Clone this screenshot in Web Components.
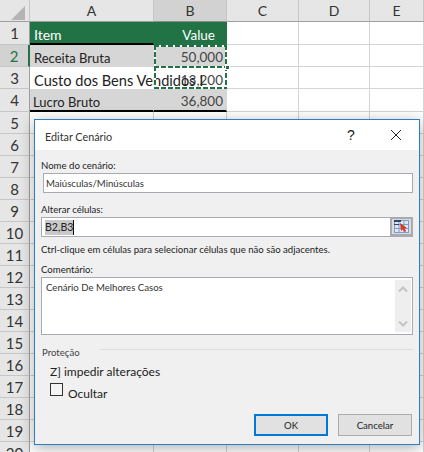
<!DOCTYPE html>
<html lang="pt"><head><meta charset="utf-8"><title>Editar Cenário</title>
<style>
html,body{margin:0;padding:0;background:#fff;overflow:hidden}
x-app{width:424px;height:452px}
</style></head><body>
<x-app>
  <x-sheet></x-sheet>
  <x-dialog title="Editar Cenário">
    <x-field class="inset" label="Nome do cenário:" value="Maiúsculas/Minúsculas"></x-field>
    <x-field label="Alterar células:" value="B2,B3" selected hint="Ctrl-clique em células para selecionar células que não são adjacentes."></x-field>
    <x-comment label="Comentário:" value="Cenário De Melhores Casos"></x-comment>
    <x-protect></x-protect>
    <x-button slot="actions" default>OK</x-button>
    <x-button slot="actions">Cancelar</x-button>
  </x-dialog>
</x-app>
<script>
customElements.define('x-app',class extends HTMLElement{constructor(){super();this.attachShadow({mode:'open'}).innerHTML=
`<style>:host{display:block;position:relative;overflow:hidden;width:424px;height:452px}</style><slot></slot>`}});

customElements.define('x-sheet',class extends HTMLElement{constructor(){super();
 const cols=['A','B','C','D','E'];
 const data={1:['Item','Value'],2:['Receita Bruta','50,000'],3:['Custo dos Bens Vendidos I','13,200'],4:['Lucro Bruto','36,800']};
 let h=`<div class="corner"><svg width="14" height="14" viewBox="0 0 14 14"><path d="M14 0V14H0Z" fill="#b4b4b4"/></svg></div>`;
 cols.forEach(c=>h+=`<div class="ch ${c==='B'?'on':''}">${c}</div>`);
 for(let r=1;r<=20;r++){
  h+=`<div class="rh ${r===2?'on':''}">${r}</div>`;
  cols.forEach((c,i)=>{
   let cls='c',t='';
   if(data[r]&&i<2){cls+=` d r${r} ${i?'num':'txt'}`;t=data[r][i];}
   h+=`<div class="${cls}"><span>${t}</span></div>`;
  });
 }
 const hz='repeating-linear-gradient(90deg,#217346 0 5px,#fff 5px 7px)';
 const vt='repeating-linear-gradient(180deg,#217346 0 5px,#fff 5px 7px)';
 this.attachShadow({mode:'open'}).innerHTML=`<style>
 :host{display:grid;grid-template-columns:30px 124px 73px 72px 71px 54px;grid-template-rows:22px 23px 22px 22px 23px repeat(16,22px);
  font:14px/1 Lato,"Liberation Sans",sans-serif;color:#222;position:relative;height:452px;overflow:hidden}
 .corner{background:#e6e6e6;border-right:1px solid #c6c6c6;border-bottom:1px solid #9e9e9e;box-sizing:border-box;display:flex;align-items:flex-end;justify-content:flex-end;padding:0 4px 1px 0}
 .ch{background:#e6e6e6;border-right:1px solid #c6c6c6;border-bottom:1px solid #9e9e9e;box-sizing:border-box;display:flex;align-items:center;justify-content:center;font:14px Lato,sans-serif;color:#333}
 .ch.on{background:#d2d2d2;border-bottom:1px solid #8e8e8e}
 .rh{background:#e6e6e6;border-right:1px solid #9e9e9e;border-bottom:1px solid #c6c6c6;box-sizing:border-box;display:flex;align-items:center;justify-content:center;font:15px Lato,sans-serif;color:#333}
 .rh.on{background:#d2d2d2;color:#217346;border-right:2px solid #217346}
 .c{border-right:1px solid #d4d4d4;border-bottom:1px solid #d4d4d4;box-sizing:border-box;display:flex;align-items:center;padding:0 3px;white-space:nowrap;min-width:0}
 .d{border-color:transparent}
 .num{justify-content:flex-end;padding-right:3px}
 .txt span{position:relative;z-index:1}
 .r1{background:#217346;color:#fff;font-size:14px;padding-top:4px}
 .r1.txt{padding-left:4px;border-bottom:2px solid #000}
 .r1.num{padding-right:11px;border-bottom-width:0;font-size:13.5px}
 .r2{background:#d6d6d6}
 .r3{background:#fff}
 .r3.txt{border-color:transparent}
 .r4{background:#d6d6d6;border-bottom:2px solid #000}
 .txt{padding-left:4px}
 .r2.txt{font-size:13px;padding-top:6px}
 .r4.txt{font-size:13px;padding-left:3px;padding-top:6px}
 .r3.txt{font-size:14.6px;padding-top:8px}
 .r2.num,.r3.num,.r4.num{font-size:13.5px;color:#444}
 .r2.num{padding-top:4px}.r3.num{padding-top:6px}.r4.num{padding-top:4px}
 .ants{position:absolute;left:154px;top:45px;width:73px;height:44px;z-index:3;background:
   ${hz} 0 0/100% 2px no-repeat,
   ${hz} 0 21px/100% 2px no-repeat,
   ${hz} 0 100%/100% 2px no-repeat,
   ${vt} 0 0/2px 100% no-repeat,
   ${vt} 100% 0/2px 100% no-repeat}
 .handle{position:absolute;left:225px;top:65px;width:3px;height:3px;background:#217346;border:1px solid #fff;z-index:4}
 </style>${h}<div class="ants"></div><div class="handle"></div>`;
}});

customElements.define('x-dialog',class extends HTMLElement{constructor(){super();
 this.attachShadow({mode:'open'}).innerHTML=`<style>
 :host{display:flex;flex-direction:column;position:absolute;left:34px;top:119px;width:386px;height:326px;box-sizing:border-box;border:1px solid #2b7fc9;background:#f0f0f0;
  box-shadow:0 3px 14px rgba(0,0,0,.32);font:9.6px Lato,"Liberation Sans",sans-serif;color:#222;z-index:5}
 header{height:30px;background:#fff;display:flex;align-items:center;flex:none}
 h1{margin:2px 0 0 10px;font:400 10.8px Lato,"Liberation Sans",sans-serif;color:#333;flex:1}
 .q{font:14px "Liberation Sans",sans-serif;width:20px;text-align:center;color:#222;margin-right:28px}
 .x{width:14px;height:14px;margin-right:16px;display:block}
 main{flex:1;display:flex;flex-direction:column;padding:9px 6px 0 6px;box-sizing:border-box;min-height:0}
 footer{display:flex;justify-content:flex-end;gap:10px;padding:0 7px 8px 0;flex:none}
 </style>
 <header><h1>${this.getAttribute('title')}</h1><span class="q">?</span>
 <svg class="x" viewBox="0 0 14 14"><path d="M2 2L12 12M12 2L2 12" stroke="#222" stroke-width="1" fill="none"/></svg></header>
 <main><slot></slot></main><footer><slot name="actions"></slot></footer>`;
}});

customElements.define('x-field',class extends HTMLElement{constructor(){super();
 const sel=this.hasAttribute('selected'),hint=this.getAttribute('hint');
 const icon=`<span class="pick"><svg width="15" height="13" viewBox="0 0 15 13"><rect x=".5" y=".5" width="14" height="12" fill="#dfe8f5" stroke="#7d9cc8"/><path d="M0 4.5H15M0 8.5H15M5 0V13M10 0V13" stroke="#7d9cc8"/><path d="M0 1H7" stroke="#27476f" stroke-width="2"/><path d="M0 4.5H5" stroke="#27476f"/><path d="M6 3l7 5-2.6.5 1.8 2.6-1.6 1-1.8-2.6-1.8 1.6z" fill="#d83b20"/></svg></span>`;
 this.attachShadow({mode:'open'}).innerHTML=`<style>
 :host{display:block}
 :host(:not([selected])){margin-bottom:10px}
 label{display:block;height:14px;line-height:14px;color:#222}
 .box{height:20px;box-sizing:border-box;border:1px solid #a9a9b1;background:#fff;display:flex;align-items:center;padding-left:3px;color:#333}
 :host(.inset) .box{margin-left:2px;padding-left:2px}
 :host([selected]) .box{font-size:10.6px;color:#222}
 .s{background:#c9c9c9;padding:1px 0;border-right:1px solid #111;line-height:13px}
 .sp{flex:1}
 .pick{width:22px;box-sizing:border-box;border:2px solid #a9a9b1;border-top-width:1px;border-right-width:1px;background:#dcdcdc;display:flex;align-items:center;justify-content:center;align-self:stretch}
 .hint{display:block;margin-top:5px;height:15px;line-height:15px}
 </style><label>${this.getAttribute('label')}</label>
 <div class="box">${sel?`<span class="s">${this.getAttribute('value')}</span><span class="sp"></span>${icon}`:this.getAttribute('value')}</div>
 ${hint?`<span class="hint">${hint}</span>`:''}`;
}});

customElements.define('x-comment',class extends HTMLElement{constructor(){super();
 this.attachShadow({mode:'open'}).innerHTML=`<style>
 :host{display:block;margin:6px 0 0 0}
 label{display:block;height:14px;line-height:14px}
 .box{height:58px;box-sizing:border-box;border:1px solid #a9a9b1;background:#fff;display:flex;justify-content:space-between;color:#333}
 .t{padding:4px 0 0 4px}
 .sb{width:16px;margin:2px 1px 2px 0;background:#eee;display:flex;flex-direction:column;justify-content:space-between;align-items:center;padding:6px 0 5px;box-sizing:border-box}
 svg{display:block}
 </style><label>${this.getAttribute('label')}</label><div class="box"><div class="t">${this.getAttribute('value')}</div>
 <div class="sb"><svg width="10" height="6" viewBox="0 0 10 6"><path d="M1 5.5L5 1.5L9 5.5" stroke="#c4c4c4" stroke-width="2" fill="none"/></svg>
 <svg width="10" height="6" viewBox="0 0 10 6"><path d="M1 .5L5 4.5L9 .5" stroke="#c4c4c4" stroke-width="2" fill="none"/></svg></div></div>`;
}});

customElements.define('x-protect',class extends HTMLElement{constructor(){super();
 this.attachShadow({mode:'open'}).innerHTML=`<style>
 :host{display:flex;flex-direction:column;flex:1;margin:10px 0 0 1px}
 .head{display:flex;align-items:flex-start;gap:20px;height:15px;line-height:15px;color:#444}
 .head i{flex:1;height:1px;background:#ddd;margin-top:4px}
 .r{display:flex;margin-left:8px;font-size:12px;color:#222}
 .r1{margin-top:2px;height:20px;line-height:20px}
 .z{margin-right:3px}
 .r2{height:24px}
 .cb{width:13px;height:13px;border:1px solid #333;background:#f4f4f4;box-sizing:border-box;margin:1px 5px 0 0}
 .o{margin-top:4px;line-height:16px}
 </style><div class="head"><span>Proteção</span><i></i></div>
 <div class="r r1"><span class="z">Z]</span><span>impedir alterações</span></div>
 <div class="r r2"><span class="cb"></span><span class="o">Ocultar</span></div>`;
}});

customElements.define('x-button',class extends HTMLElement{constructor(){super();
 this.attachShadow({mode:'open'}).innerHTML=`<style>
 :host{display:flex;align-items:center;justify-content:center;width:74px;height:22px;box-sizing:border-box;background:#e1e1e1;border:1px solid #adadad;font-size:9.6px;color:#222}
 :host([default]){border:2px solid #0078d7}
 </style><slot></slot>`;
}});
</script>
</body></html>
